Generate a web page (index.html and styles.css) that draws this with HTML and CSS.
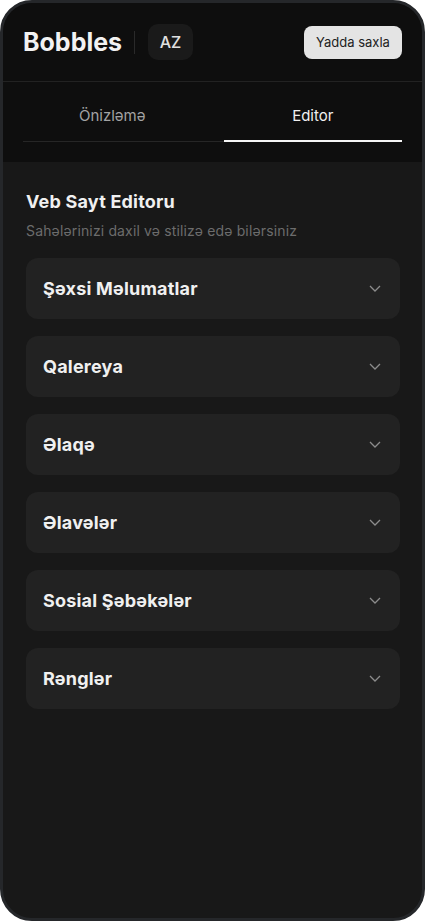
FILE: index.html
```html
<!DOCTYPE html>
<html lang="az">
<head>
    <meta charset="UTF-8">
    <meta name="viewport" content="width=device-width, initial-scale=1.0">
    <title>Bobbles Editor</title>
    <link rel="stylesheet" href="styles.css">
</head>
<body>

<div class="phone">
    <!-- Header -->
    <div class="header">
        <div class="brand">Bobbles</div>
        <div class="divider"></div>
        <button class="lang-button">AZ</button>
        <button class="save-button">Yadda saxla</button>
    </div>

    <!-- Tabs -->
    <div class="tabs-wrap">
        <div class="tabs">
            <div class="tab">Önizləmə</div>
            <div class="tab active">Editor</div>
        </div>
    </div>

    <!-- Editor -->
    <div class="editor">
        <div class="editor-title">Veb Sayt Editoru</div>
        <div class="editor-subtitle">Sahələrinizi daxil və stilizə edə bilərsiniz</div>

        <div class="section-list">
            <div class="section-item">
                <span>Şəxsi Məlumatlar</span>
                <svg class="chevron" width="12" height="7" viewBox="0 0 12 7"><path d="M1 1 L6 6 L11 1" /></svg>
            </div>
            <div class="section-item">
                <span>Qalereya</span>
                <svg class="chevron" width="12" height="7" viewBox="0 0 12 7"><path d="M1 1 L6 6 L11 1" /></svg>
            </div>
            <div class="section-item">
                <span>Əlaqə</span>
                <svg class="chevron" width="12" height="7" viewBox="0 0 12 7"><path d="M1 1 L6 6 L11 1" /></svg>
            </div>
            <div class="section-item">
                <span>Əlavələr</span>
                <svg class="chevron" width="12" height="7" viewBox="0 0 12 7"><path d="M1 1 L6 6 L11 1" /></svg>
            </div>
            <div class="section-item">
                <span>Sosial Şəbəkələr</span>
                <svg class="chevron" width="12" height="7" viewBox="0 0 12 7"><path d="M1 1 L6 6 L11 1" /></svg>
            </div>
            <div class="section-item">
                <span>Rənglər</span>
                <svg class="chevron" width="12" height="7" viewBox="0 0 12 7"><path d="M1 1 L6 6 L11 1" /></svg>
            </div>
        </div>
    </div>
</div>

</body>
</html>
```

FILE: styles.css
```css
body {
    margin: 0;
    padding: 0;
    background-color: #fff;
    font-family: Inter, "Noto Sans", Arial, sans-serif;
}

.phone {
    box-sizing: border-box;
    width: 425px;
    height: 921px;
    border: 3px solid #25272a;
    border-radius: 32px;
    overflow: hidden;
    background-color: #181818;
    display: flex;
    flex-direction: column;
}

.header {
    height: 78px;
    padding: 0 20px;
    background-color: #0e0e0e;
    border-bottom: 1px solid #222;
    display: flex;
    align-items: center;
}

.brand {
    color: #f2f2f2;
    font-size: 25px;
    font-weight: 700;
}

.divider {
    width: 1px;
    height: 23px;
    background-color: #2a2a2a;
    margin: 0 13px 0 12px;
}

.lang-button {
    width: 45px;
    height: 36px;
    border: none;
    border-radius: 10px;
    background-color: #1a1a1a;
    color: #e0e0e0;
    font-family: inherit;
    font-size: 16px;
    font-weight: 500;
    padding: 0;
}

.save-button {
    margin-left: auto;
    width: 98px;
    height: 33px;
    border: none;
    border-radius: 8px;
    background-color: #e4e4e4;
    color: #222;
    font-family: inherit;
    font-size: 13px;
    padding: 0;
}

.tabs-wrap {
    background-color: #0e0e0e;
    padding: 10px 20px 20px;
}

.tabs {
    display: grid;
    grid-template-columns: 1fr 1fr;
    column-gap: 22px;
    border-bottom: 1px solid #262626;
}

.tab {
    text-align: center;
    padding: 14px 0;
    line-height: 20px;
    font-size: 15px;
    color: #a3a3a3;
    margin-bottom: -1px;
    border-bottom: 2px solid transparent;
}

.tab.active {
    color: #f0f0f0;
    border-bottom-color: #f5f5f5;
}

.editor {
    padding: 28px 22px 0 23px;
}

.editor-title {
    color: #f0f0f0;
    font-size: 18px;
    font-weight: 700;
    line-height: 24px;
    letter-spacing: 0.2px;
}

.editor-subtitle {
    margin-top: 7px;
    color: #6c6c6c;
    font-size: 14px;
    line-height: 20px;
    letter-spacing: 0.15px;
}

.section-list {
    margin-top: 17px;
    display: flex;
    flex-direction: column;
    gap: 17px;
}

.section-item {
    height: 61px;
    padding: 0 19px 0 17px;
    background-color: #222;
    border-radius: 12px;
    display: flex;
    align-items: center;
    justify-content: space-between;
    color: #f0f0f0;
    font-size: 18px;
    font-weight: 700;
    letter-spacing: 0.2px;
}

.chevron path {
    fill: none;
    stroke: #8c8c8c;
    stroke-width: 1.3;
}
```
